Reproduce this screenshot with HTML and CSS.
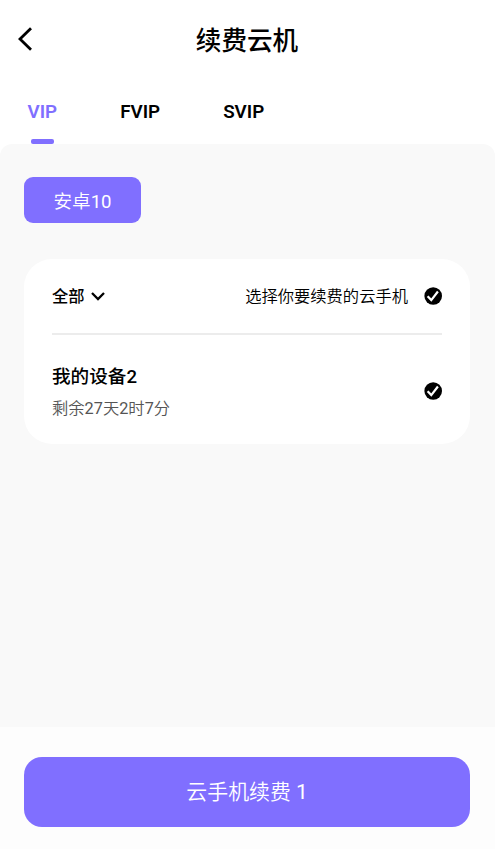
FILE: index.html
```html
<!DOCTYPE html>
<html lang="zh-CN">
<head>
<meta charset="utf-8">
<title>续费云机</title>
<link rel="stylesheet" href="styles.css">
</head>
<body>
<header class="header">
  <svg class="back" viewBox="0 0 16 24"><path d="M14 1.2 3 12l11 10.8"/></svg>
  <h1 class="title">续费云机</h1>
</header>
<nav class="tabs">
  <a class="tab active">VIP</a>
  <a class="tab">FVIP</a>
  <a class="tab">SVIP</a>
</nav>
<main class="content">
  <button class="chip">安卓<span class="num">10</span></button>
  <section class="card">
    <div class="filter">
      <span class="all">全部</span>
      <svg class="chevron" viewBox="0 0 14 10"><path d="m1 2 6 6 6-6"/></svg>
      <span class="hint">选择你要续费的云手机</span>
      <svg class="check" viewBox="0 0 18 18"><circle cx="9.2" cy="9" r="8.8"/><path d="m3.6 9.2 3.7 3.9 6.6-8.6"/></svg>
    </div>
    <div class="device">
      <div class="info">
        <div class="name">我的设备2</div>
        <div class="left">剩余<span class="num">27</span>天<span class="num">2</span>时<span class="num">7</span>分</div>
      </div>
      <svg class="check" viewBox="0 0 18 18"><circle cx="9.2" cy="9" r="8.8"/><path d="m3.6 9.2 3.7 3.9 6.6-8.6"/></svg>
    </div>
  </section>
</main>
<footer class="footer">
  <button class="renew">云手机续费 <span class="num">1</span></button>
</footer>
</body>
</html>
```
FILE: styles.css
```css
* { box-sizing: border-box; }
body {
  margin: 0;
  height: 849px;
  display: flex;
  flex-direction: column;
  overflow: hidden;
  background: #fff;
  color: #000;
  font-family: Roboto, "Noto Sans CJK SC", sans-serif;
  font-weight: 350;
}
svg { display: block; fill: none; flex: none; }
button { border: 0; padding: 0; font-family: inherit; font-weight: inherit; color: #fff; background: #806fff; }
.num { font-weight: 400; }
.header {
  height: 80px;
  display: grid;
  grid-template-columns: 32px 1fr 32px;
  align-items: center;
  padding: 0 17px 0 16px;
}
.back { width: 16px; height: 24px; margin: -2px 0 0 1px; stroke: #000; stroke-width: 2.8; }
.title { margin: 2px 0 0; text-align: center; font-size: 25.6px; font-weight: 500; line-height: 38px; }
.tabs { height: 64px; display: flex; padding-left: 27.5px; }
.tab {
  display: flex;
  flex-direction: column;
  justify-content: space-between;
  align-items: center;
  padding-top: 20px;
  margin-right: 63px;
  font-size: 18.8px;
  font-weight: 600;
  line-height: 24px;
}
.active { color: #806fff; }
.active::after { content: ""; width: 23px; height: 5px; border-radius: 2px; background: #806fff; }
.content { flex: 1; background: #f9f9f9; border-radius: 12px 12px 0 0; padding: 33px 25px 0 24px; }
.chip { display: block; width: 117px; height: 46px; padding-bottom: 2px; border-radius: 9px; font-size: 18.6px; }
.card { margin-top: 36px; height: 185px; border-radius: 28px; background: #fff; padding: 0 28px; }
.filter { height: 76px; display: flex; align-items: center; border-bottom: 2px solid #ececec; }
.all { margin-top: -2px; font-size: 16.3px; font-weight: 500; }
.chevron { width: 14px; height: 10px; margin-left: 6.5px; stroke: #000; stroke-width: 2.3; }
.hint { margin: -2px 0 0 auto; font-size: 16.3px; }
.check { width: 18px; height: 18px; margin-left: 16px; }
.check circle { fill: #000; }
.check path { stroke: #fff; stroke-width: 2.2; }
.device { height: 112px; display: flex; justify-content: space-between; align-items: center; }
.info { padding-top: 4px; }
.name { font-size: 18.6px; font-weight: 500; line-height: 32px; }
.left { font-size: 16.3px; line-height: 32px; color: #555; }
.footer { height: 122px; background: #fdfdfd; padding: 30px 25px 0 24px; }
.renew { display: block; width: 100%; height: 70px; padding-bottom: 5px; border-radius: 18px; font-size: 20.9px; }
```
